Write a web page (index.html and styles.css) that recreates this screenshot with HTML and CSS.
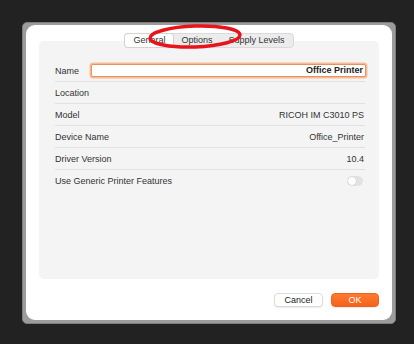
FILE: index.html
```html
<!DOCTYPE html>
<html lang="en">
<head>
  <meta charset="UTF-8">
  <title>Printer Options</title>
  <link rel="stylesheet" href="styles.css">
</head>
<body>

  <div class="stage">
    <div class="frame">
      <div class="dialog">

        <div class="tabs">
          <button class="tab active">General</button>
          <button class="tab">Options</button>
          <button class="tab">Supply Levels</button>
        </div>

        <div class="panel">
          <div class="row">
            <span class="label">Name</span>
            <div class="field">Office Printer</div>
          </div>
          <div class="row">
            <span class="label">Location</span>
          </div>
          <div class="row">
            <span class="label">Model</span>
            <span class="value">RICOH IM C3010 PS</span>
          </div>
          <div class="row">
            <span class="label">Device Name</span>
            <span class="value">Office_Printer</span>
          </div>
          <div class="row">
            <span class="label">Driver Version</span>
            <span class="value">10.4</span>
          </div>
          <div class="row last">
            <span class="label">Use Generic Printer Features</span>
            <span class="toggle"><span class="knob"></span></span>
          </div>
        </div>

        <div class="actions">
          <button class="btn">Cancel</button>
          <button class="btn primary">OK</button>
        </div>

      </div>
    </div>
  </div>

  <!-- red marker drawn over the tab bar -->
  <svg class="marker" width="414" height="344" viewBox="0 0 414 344">
    <ellipse cx="195" cy="36.5" rx="45" ry="10.5" transform="rotate(-2 195 36)"
             fill="none" stroke="#e8131b" stroke-width="3.5"/>
  </svg>

</body>
</html>
```

FILE: styles.css
```css
:root {
  --page: #222222;
  --frame: #9c9c9c;
  --panel: #f4f4f4;
  --line: #e1e1e1;
  --text: #2a2a2a;
  --accent: #fb6a1f;
}

* { box-sizing: border-box; }

body {
  margin: 0;
  width: 414px;
  height: 344px;
  background: var(--page);
  font-family: "Liberation Sans", Arial, sans-serif;
  font-size: 9px;
  color: var(--text);
  overflow: hidden;
}

.stage { padding: 22px 18px 0 22px; }

.frame {
  width: 374px;
  height: 302px;
  background: var(--frame);
  border: 1px solid #7d7d7d;
  border-radius: 5px;
  padding: 2px 3px 3px 3px;
}

.dialog {
  height: 295px;
  background: #fff;
  border-radius: 9px;
  padding: 8px 13px 0 13px;
  display: flex;
  flex-direction: column;
}

/* ---------- segmented tabs ---------- */
.tabs {
  position: relative;
  z-index: 1;
  align-self: center;
  display: flex;
  height: 15px;
  background: #ececec;
  border: 1px solid #dadada;
  border-radius: 4px;
}
.tab {
  font: inherit;
  font-size: 9px;
  color: #333;
  background: none;
  border: none;
  padding: 0 8px;
  line-height: 13px;
}
.tab.active {
  background: #fff;
  border-radius: 3px;
  box-shadow: 0 0 0 1px #d4d4d4, 0 1px 1px rgba(0,0,0,.08);
}

/* ---------- panel ---------- */
.panel {
  margin-top: -7px;
  height: 238px;
  background: var(--panel);
  border-radius: 5px;
  padding: 19px 14px 0 16px;
}
.row {
  display: flex;
  align-items: center;
  justify-content: space-between;
  height: 22px;
  border-bottom: 1px solid var(--line);
}
.row.last { border-bottom: none; }
.label { color: #333; }
.value { color: #333; padding-right: 1px; }

.field {
  flex: 1;
  margin-left: 12px;
  margin-right: -1px;
  height: 13px;
  line-height: 11px;
  text-align: right;
  padding: 0 2px;
  font-weight: bold;
  color: #222;
  background: #fff;
  border: 1px solid #e8925f;
  border-radius: 2px;
  box-shadow: 0 0 0 1.5px #f7bc96;
}

.toggle {
  width: 16px;
  height: 10px;
  margin-right: 2px;
  border-radius: 5px;
  background: #e2e2e2;
  padding: 1px;
}
.knob {
  display: block;
  width: 8px;
  height: 8px;
  border-radius: 50%;
  background: #fff;
  box-shadow: 0 0 1px rgba(0,0,0,.25);
}

/* ---------- buttons ---------- */
.actions {
  display: flex;
  justify-content: flex-end;
  gap: 8px;
  margin-top: 14px;
}
.btn {
  font: inherit;
  font-size: 9px;
  width: 49px;
  height: 14px;
  padding: 0;
  color: #222;
  background: #fff;
  border: 1px solid #dcdcdc;
  border-radius: 4px;
  box-shadow: 0 1px 1px rgba(0,0,0,.08);
}
.btn.primary {
  width: 48px;
  color: #fff;
  background: linear-gradient(#ff7a30, #f4621a);
  border-color: #f0631c;
}

.marker {
  position: absolute;
  z-index: 2;
  left: 0;
  top: 0;
  pointer-events: none;
}
```
